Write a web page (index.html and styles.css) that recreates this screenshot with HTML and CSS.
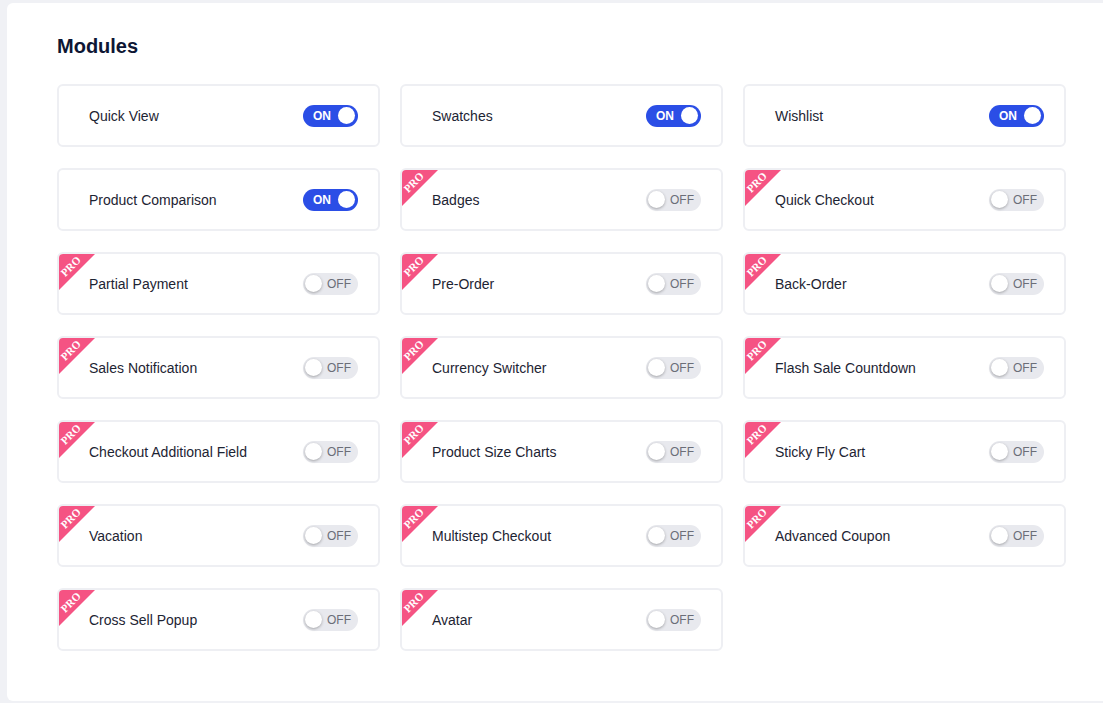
FILE: index.html
```html
<!DOCTYPE html>
<html>
<head>
<meta charset="utf-8">
<link rel="stylesheet" href="styles.css">
</head>
<body>
<div class="panel">
  <h1 class="title">Modules</h1>
  <div class="grid">
    <div class="card"><span class="label">Quick View</span><span class="toggle on"><span class="txt">ON</span><span class="knob"></span></span></div>
    <div class="card"><span class="label">Swatches</span><span class="toggle on"><span class="txt">ON</span><span class="knob"></span></span></div>
    <div class="card"><span class="label">Wishlist</span><span class="toggle on"><span class="txt">ON</span><span class="knob"></span></span></div>
    <div class="card"><span class="label">Product Comparison</span><span class="toggle on"><span class="txt">ON</span><span class="knob"></span></span></div>
    <div class="card"><span class="pro"><span class="pro-txt">PRO</span></span><span class="label">Badges</span><span class="toggle"><span class="knob"></span><span class="txt">OFF</span></span></div>
    <div class="card"><span class="pro"><span class="pro-txt">PRO</span></span><span class="label">Quick Checkout</span><span class="toggle"><span class="knob"></span><span class="txt">OFF</span></span></div>
    <div class="card"><span class="pro"><span class="pro-txt">PRO</span></span><span class="label">Partial Payment</span><span class="toggle"><span class="knob"></span><span class="txt">OFF</span></span></div>
    <div class="card"><span class="pro"><span class="pro-txt">PRO</span></span><span class="label">Pre-Order</span><span class="toggle"><span class="knob"></span><span class="txt">OFF</span></span></div>
    <div class="card"><span class="pro"><span class="pro-txt">PRO</span></span><span class="label">Back-Order</span><span class="toggle"><span class="knob"></span><span class="txt">OFF</span></span></div>
    <div class="card"><span class="pro"><span class="pro-txt">PRO</span></span><span class="label">Sales Notification</span><span class="toggle"><span class="knob"></span><span class="txt">OFF</span></span></div>
    <div class="card"><span class="pro"><span class="pro-txt">PRO</span></span><span class="label">Currency Switcher</span><span class="toggle"><span class="knob"></span><span class="txt">OFF</span></span></div>
    <div class="card"><span class="pro"><span class="pro-txt">PRO</span></span><span class="label">Flash Sale Countdown</span><span class="toggle"><span class="knob"></span><span class="txt">OFF</span></span></div>
    <div class="card"><span class="pro"><span class="pro-txt">PRO</span></span><span class="label">Checkout Additional Field</span><span class="toggle"><span class="knob"></span><span class="txt">OFF</span></span></div>
    <div class="card"><span class="pro"><span class="pro-txt">PRO</span></span><span class="label">Product Size Charts</span><span class="toggle"><span class="knob"></span><span class="txt">OFF</span></span></div>
    <div class="card"><span class="pro"><span class="pro-txt">PRO</span></span><span class="label">Sticky Fly Cart</span><span class="toggle"><span class="knob"></span><span class="txt">OFF</span></span></div>
    <div class="card"><span class="pro"><span class="pro-txt">PRO</span></span><span class="label">Vacation</span><span class="toggle"><span class="knob"></span><span class="txt">OFF</span></span></div>
    <div class="card"><span class="pro"><span class="pro-txt">PRO</span></span><span class="label">Multistep Checkout</span><span class="toggle"><span class="knob"></span><span class="txt">OFF</span></span></div>
    <div class="card"><span class="pro"><span class="pro-txt">PRO</span></span><span class="label">Advanced Coupon</span><span class="toggle"><span class="knob"></span><span class="txt">OFF</span></span></div>
    <div class="card"><span class="pro"><span class="pro-txt">PRO</span></span><span class="label">Cross Sell Popup</span><span class="toggle"><span class="knob"></span><span class="txt">OFF</span></span></div>
    <div class="card"><span class="pro"><span class="pro-txt">PRO</span></span><span class="label">Avatar</span><span class="toggle"><span class="knob"></span><span class="txt">OFF</span></span></div>
  </div>
</div>
</body>
</html>
```

FILE: styles.css
```css
html, body {
  margin: 0;
  padding: 0;
  background: #f0f1f5;
  font-family: "Liberation Sans", Arial, sans-serif;
}
body {
  padding: 3px 0 2px 7px;
  height: 703px;
  box-sizing: border-box;
  overflow: hidden;
}
.panel {
  background: #ffffff;
  border-radius: 6px 0 0 6px;
  height: 698px;
  box-sizing: border-box;
  padding: 31px 0 0 50px;
}
.title {
  margin: 0;
  font-size: 20px;
  line-height: 24px;
  font-weight: bold;
  color: #0d1634;
}
.grid {
  margin-top: 26px;
  display: grid;
  grid-template-columns: repeat(3, 323px);
  column-gap: 20px;
  row-gap: 21px;
}
.card {
  position: relative;
  height: 63px;
  box-sizing: border-box;
  border: 2px solid #eeeff3;
  border-radius: 6px;
  display: flex;
  align-items: center;
  justify-content: space-between;
  padding: 0 20px 0 30px;
  overflow: hidden;
}
.label {
  font-size: 14px;
  color: #1d2433;
}
.toggle {
  width: 55px;
  height: 22px;
  border-radius: 11px;
  background: #e8e9ee;
  display: flex;
  align-items: center;
  box-sizing: border-box;
  padding: 0 3px 0 2px;
  gap: 5px;
}
.toggle .knob {
  width: 17px;
  height: 17px;
  border-radius: 50%;
  background: #ffffff;
  box-shadow: 0 1px 3px rgba(0,0,0,0.3);
  flex: none;
}
.toggle .txt {
  font-size: 12px;
  color: #6b6e78;
}
.toggle.on {
  background: #2b4ee6;
  padding: 0 3px 0 10px;
  justify-content: space-between;
}
.toggle.on .txt {
  color: #ffffff;
  font-weight: bold;
}
.toggle.on .knob {
  box-shadow: none;
}
.pro {
  position: absolute;
  left: -2px;
  top: -2px;
  width: 40px;
  height: 40px;
  background: #f55383;
  clip-path: polygon(0 0, 100% 0, 0 100%);
}
.pro-txt {
  position: absolute;
  left: 0px;
  top: 9px;
  width: 28px;
  text-align: center;
  font-family: "Liberation Serif", "Times New Roman", serif;
  font-weight: bold;
  font-size: 11px;
  line-height: 11px;
  color: #ffffff;
  transform: rotate(-45deg);
}
```
